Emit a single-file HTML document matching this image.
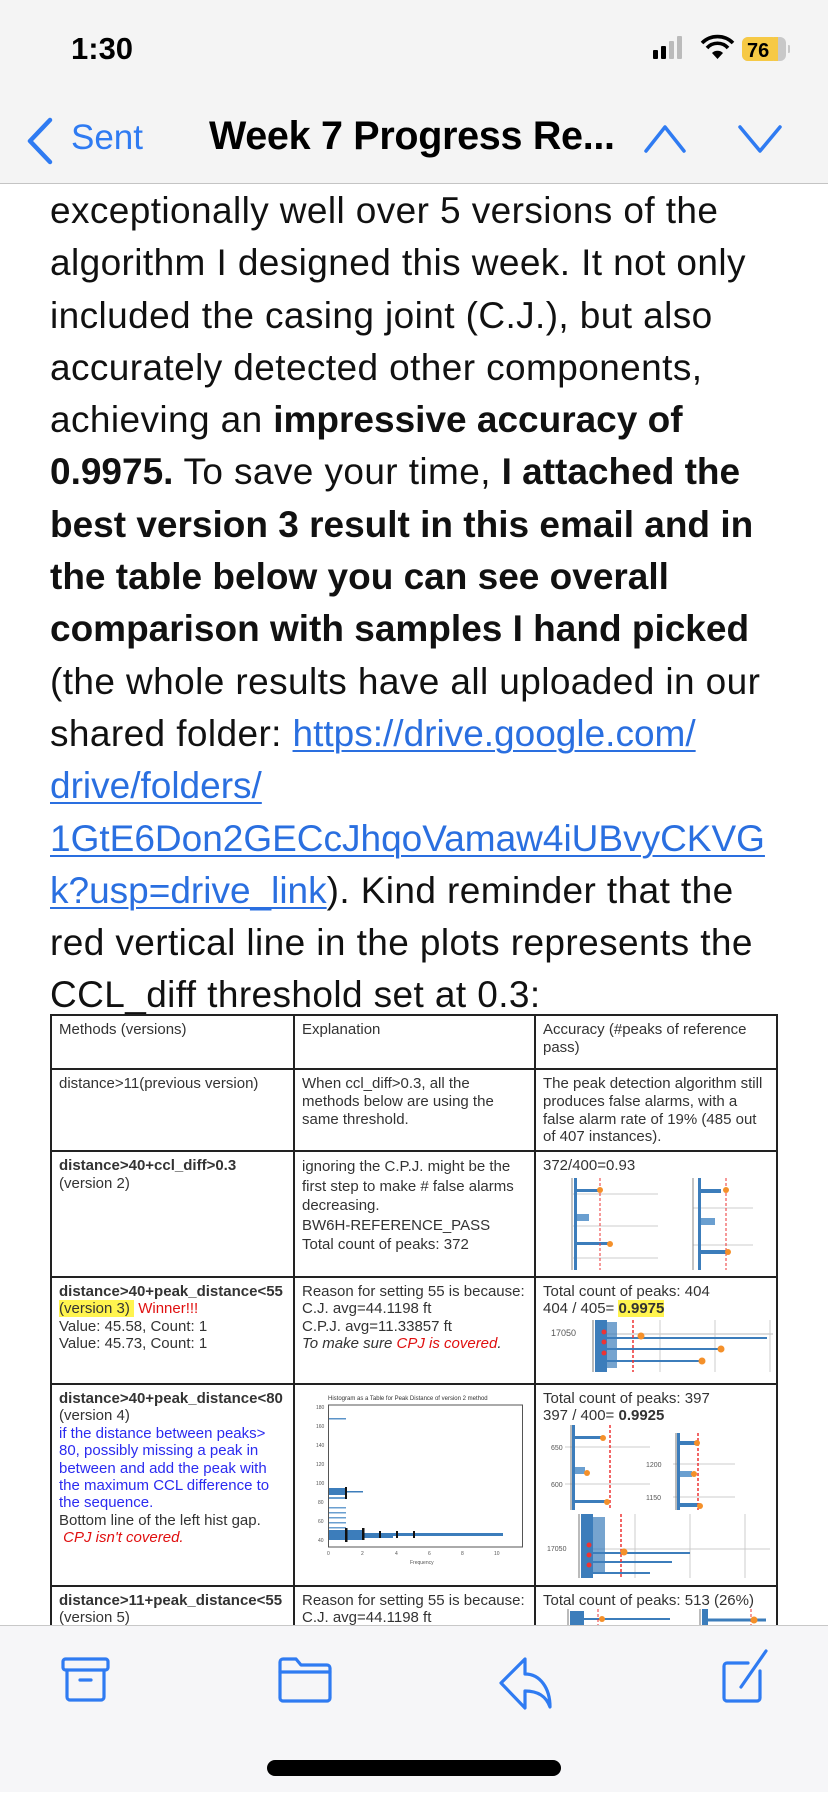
<!DOCTYPE html>
<html><head><meta charset="utf-8">
<style>
*{margin:0;padding:0;box-sizing:border-box}
body{width:828px;height:1792px;overflow:hidden;background:#fff;position:relative;font-family:"Liberation Sans",Arial,sans-serif;color:#000}
.hdr{position:absolute;left:0;top:0;width:828px;height:184px;background:#f4f4f4;border-bottom:1.5px solid #c4c4c4;z-index:5}
.body{position:absolute;left:50px;top:185px;font-size:37px;line-height:52.3px;white-space:nowrap;color:#111;letter-spacing:0.4px}
.body b{letter-spacing:0}
.body a{color:#2a6fe0;text-decoration:underline;text-decoration-thickness:1.5px;text-underline-offset:4px;letter-spacing:0}
.tb{position:absolute;font-size:15px;line-height:17.8px;color:#333;white-space:nowrap}
.hl{position:absolute;background:#222;}
.c{position:absolute;padding:7px 0 0 8px}
.blu{color:#2b2bf0}
.red{color:#e01010}
.toolbar{position:absolute;left:0;top:1625px;width:828px;height:167px;background:#f6f6f8;border-top:1.5px solid #c8c8c8;z-index:5}
</style></head><body>
<div class="hdr">
 <div style="position:absolute;left:71px;top:31px;font-size:31px;font-weight:bold;color:#000">1:30</div>
 <svg style="position:absolute;left:650px;top:34px" width="140" height="32">
  <rect x="3" y="16" width="5" height="9" rx="1" fill="#000"/>
  <rect x="11" y="12" width="5" height="13" rx="1" fill="#000"/>
  <rect x="19" y="7" width="5" height="18" rx="1" fill="#bbb"/>
  <rect x="27" y="2" width="5" height="23" rx="1" fill="#bbb"/>
  <path d="M52 9 a22 22 0 0 1 31 0" stroke="#000" stroke-width="3.6" fill="none"/>
  <path d="M57 14 a14 14 0 0 1 21 0" stroke="#000" stroke-width="3.6" fill="none"/>
  <path d="M62 19 L67.5 25 L73 19 a8 8 0 0 0 -11 0z" fill="#000"/>
  <rect x="92" y="3" width="44" height="24" rx="6" fill="#c8c8c8"/>
  <rect x="92" y="3" width="36" height="24" rx="6" fill="#f6c945"/>
  <rect x="124" y="3" width="4" height="24" fill="#f6c945"/>
  <path d="M138 11 a4 4 0 0 1 0 8z" fill="#c8c8c8"/>
  <text x="97" y="23" font-family="Liberation Sans" font-weight="bold" font-size="20" fill="#000">76</text>
 </svg>
 <svg style="position:absolute;left:22px;top:116px" width="36" height="50"><path d="M28 4 L8 25 L28 46" stroke="#2f7bf2" stroke-width="4.5" fill="none" stroke-linecap="round" stroke-linejoin="round"/></svg>
 <div style="position:absolute;left:71px;top:118px;font-size:35px;color:#2f7bf2">Sent</div>
 <div style="position:absolute;left:209px;top:114px;font-size:39.5px;font-weight:bold;color:#000;letter-spacing:-0.3px">Week 7 Progress Re...</div>
 <svg style="position:absolute;left:640px;top:117px" width="150" height="40"><path d="M6 34 L25 10 L44 34" stroke="#2f7bf2" stroke-width="3.5" fill="none" stroke-linecap="round" stroke-linejoin="round"/><path d="M100 10 L120 34 L140 10" stroke="#2f7bf2" stroke-width="3.5" fill="none" stroke-linecap="round" stroke-linejoin="round"/></svg>
</div>

<div class="body">exceptionally well over 5 versions of the<br>algorithm I designed this week. It not only<br>included the casing joint (C.J.), but also<br>accurately detected other components,<br>achieving an <b>impressive accuracy of</b><br><b>0.9975.</b> To save your time, <b>I attached the</b><br><b>best version 3 result in this email and in</b><br><b>the table below you can see overall</b><br><b>comparison with samples I hand picked</b><br>(the whole results have all uploaded in our<br>shared folder: <a>https://drive.google.com/</a><br><a>drive/folders/</a><br><a>1GtE6Don2GECcJhqoVamaw4iUBvyCKVG</a><br><a>k?usp=drive_link</a>). Kind reminder that the<br>red vertical line in the plots represents the<br>CCL_diff threshold set at 0.3:</div>

<div class="tb" style="left:0;top:0;width:828px;height:1625px">
 <div class="hl" style="left:50px;top:1014px;width:727px;height:1.5px"></div>
 <div class="hl" style="left:50px;top:1068px;width:727px;height:1.5px"></div>
 <div class="hl" style="left:50px;top:1150px;width:727px;height:1.5px"></div>
 <div class="hl" style="left:50px;top:1276px;width:727px;height:1.5px"></div>
 <div class="hl" style="left:50px;top:1383px;width:727px;height:1.5px"></div>
 <div class="hl" style="left:50px;top:1585px;width:727px;height:1.5px"></div>
 <div class="hl" style="left:50px;top:1014px;width:1.5px;height:611px"></div>
 <div class="hl" style="left:293px;top:1014px;width:1.5px;height:611px"></div>
 <div class="hl" style="left:534px;top:1014px;width:1.5px;height:611px"></div>
 <div class="hl" style="left:776px;top:1014px;width:1.5px;height:611px"></div>

 <div class="c" style="left:51px;top:1014px">Methods (versions)</div>
 <div class="c" style="left:294px;top:1014px">Explanation</div>
 <div class="c" style="left:535px;top:1014px">Accuracy (#peaks of reference<br>pass)</div>

 <div class="c" style="left:51px;top:1068px">distance&gt;11(previous version)</div>
 <div class="c" style="left:294px;top:1068px">When ccl_diff&gt;0.3, all the<br>methods below are using the<br>same threshold.</div>
 <div class="c" style="left:535px;top:1068px">The peak detection algorithm still<br>produces false alarms, with a<br>false alarm rate of 19% (485 out<br>of 407 instances).</div>

 <div class="c" style="left:51px;top:1150px"><b>distance&gt;40+ccl_diff&gt;0.3</b><br>(version 2)</div>
 <div class="c" style="left:294px;top:1150px;line-height:19.6px">ignoring the C.P.J. might be the<br>first step to make # false alarms<br>decreasing.<br>BW6H-REFERENCE_PASS<br>Total count of peaks: 372</div>
 <div class="c" style="left:535px;top:1150px">372/400=0.93</div>
 <svg style="position:absolute;left:548px;top:1178px" width="220" height="92">
  <g stroke="#ddd" stroke-width="1.5"><line x1="25" y1="16" x2="110" y2="16"/><line x1="25" y1="48" x2="110" y2="48"/><line x1="25" y1="80" x2="110" y2="80"/><line x1="145" y1="30" x2="205" y2="30"/><line x1="145" y1="67" x2="205" y2="67"/></g>
  <line x1="24" y1="0" x2="24" y2="92" stroke="#888"/><line x1="145" y1="0" x2="145" y2="92" stroke="#888"/>
  <rect x="26" y="0" width="3" height="92" fill="#3c7dbb"/><rect x="29" y="11" width="22" height="3" fill="#3c7dbb"/><rect x="29" y="36" width="12" height="7" fill="#6a9fd0"/><rect x="29" y="64" width="32" height="3" fill="#3c7dbb"/>
  <rect x="150" y="0" width="3" height="92" fill="#3c7dbb"/><rect x="153" y="11" width="20" height="4" fill="#3c7dbb"/><rect x="153" y="40" width="14" height="7" fill="#6a9fd0"/><rect x="153" y="72" width="26" height="4" fill="#3c7dbb"/>
  <line x1="52" y1="0" x2="52" y2="92" stroke="#e33" stroke-dasharray="3,2"/><line x1="178" y1="0" x2="178" y2="92" stroke="#e33" stroke-dasharray="3,2"/>
  <circle cx="52" cy="12" r="3" fill="#f4902a"/><circle cx="62" cy="66" r="3" fill="#f4902a"/><circle cx="178" cy="12" r="3" fill="#f4902a"/><circle cx="180" cy="74" r="3" fill="#f4902a"/>
 </svg>

 <div class="c" style="left:51px;top:1276px;line-height:17.4px"><b>distance&gt;40+peak_distance&lt;55</b><br><span style="background:#fff44f">(version 3)&nbsp;</span> <span class="red">Winner!!!</span><br>Value: 45.58, Count: 1<br>Value: 45.73, Count: 1</div>
 <div class="c" style="left:294px;top:1276px;line-height:17.4px">Reason for setting 55 is because:<br>C.J. avg=44.1198 ft<br>C.P.J. avg=11.33857 ft<br><i>To make sure <span class="red">CPJ is covered</span>.</i></div>
 <div class="c" style="left:535px;top:1276px;line-height:17.4px">Total count of peaks: 404<br>404 / 405= <b style="background:#fff44f">0.9975</b></div>
 <svg style="position:absolute;left:545px;top:1320px" width="230" height="55">
  <text x="6" y="16" font-size="9" fill="#555" font-family="Liberation Sans">17050</text>
  <line x1="50" y1="14" x2="228" y2="14" stroke="#ddd" stroke-width="2"/>
  <g stroke="#ccc"><line x1="115" y1="0" x2="115" y2="52"/><line x1="170" y1="0" x2="170" y2="52"/><line x1="225" y1="0" x2="225" y2="52"/></g>
  <line x1="48" y1="0" x2="48" y2="52" stroke="#777"/>
  <rect x="50" y="0" width="12" height="52" fill="#3c7dbb"/><rect x="62" y="2" width="10" height="46" fill="#3c7dbb" opacity=".7"/>
  <line x1="62" y1="18" x2="222" y2="18" stroke="#3c7dbb" stroke-width="2"/><line x1="62" y1="29" x2="176" y2="29" stroke="#3c7dbb" stroke-width="2"/><line x1="62" y1="41" x2="157" y2="41" stroke="#3c7dbb" stroke-width="2"/>
  <line x1="88" y1="0" x2="88" y2="52" stroke="#e33" stroke-dasharray="3,2" stroke-width="1.5"/>
  <circle cx="96" cy="16" r="3.5" fill="#f4902a"/><circle cx="176" cy="29" r="3.5" fill="#f4902a"/><circle cx="157" cy="41" r="3.5" fill="#f4902a"/>
  <circle cx="59" cy="12" r="2.5" fill="#e33"/><circle cx="59" cy="22" r="2.5" fill="#e33"/><circle cx="59" cy="33" r="2.5" fill="#e33"/>
 </svg>

 <div class="c" style="left:51px;top:1383px;line-height:17.4px"><b>distance&gt;40+peak_distance&lt;80</b><br>(version 4)<br><span class="blu">if the distance between peaks&gt;<br>80, possibly missing a peak in<br>between and add the peak with<br>the maximum CCL difference to<br>the sequence.</span><br>Bottom line of the left hist gap.<br>&nbsp;<i class="red">CPJ isn't covered.</i></div>
 <svg style="position:absolute;left:300px;top:1390px" width="230" height="185">
  <text x="28" y="10" font-size="6" fill="#333" font-family="Liberation Sans">Histogram as a Table for Peak Distance of version 2 method</text>
  <rect x="28.5" y="15" width="194" height="142" fill="none" stroke="#555"/>
  <g font-size="5" fill="#555" font-family="Liberation Sans"><text x="16" y="19">180</text><text x="16" y="38">160</text><text x="16" y="57">140</text><text x="16" y="76">120</text><text x="16" y="95">100</text><text x="18" y="114">80</text><text x="18" y="133">60</text><text x="18" y="152">40</text>
  <text x="27" y="165">0</text><text x="61" y="165">2</text><text x="95" y="165">4</text><text x="128" y="165">6</text><text x="161" y="165">8</text><text x="194" y="165">10</text><text x="110" y="174">Frequency</text></g>
  <rect x="29" y="28" width="17" height="1.5" fill="#5b93c8"/>
  <rect x="29" y="98" width="17" height="7" fill="#3c7dbb"/><rect x="46" y="101" width="17" height="1.5" fill="#3c7dbb"/><rect x="29" y="107" width="17" height="2" fill="#6a9fd0"/>
  <g fill="#6a9fd0"><rect x="29" y="117" width="17" height="1.5"/><rect x="29" y="122" width="17" height="1.5"/><rect x="29" y="127" width="17" height="1.5"/><rect x="29" y="132" width="17" height="1.5"/><rect x="29" y="137" width="17" height="1.5"/></g>
  <rect x="29" y="140" width="34" height="10" fill="#3c7dbb"/><rect x="63" y="143" width="140" height="3" fill="#3c7dbb"/><rect x="63" y="146" width="30" height="2" fill="#3c7dbb"/>
  <g fill="#111"><rect x="45" y="97" width="2" height="12"/><rect x="45" y="138" width="2.5" height="14"/><rect x="62" y="138" width="2.5" height="12"/><rect x="79" y="141" width="2" height="7"/><rect x="96" y="141" width="2" height="7"/><rect x="113" y="141" width="2" height="7"/></g>
 </svg>
 <div class="c" style="left:535px;top:1383px;line-height:17.4px">Total count of peaks: 397<br>397 / 400= <b>0.9925</b></div>
 <svg style="position:absolute;left:545px;top:1425px" width="230" height="160">
  <g font-size="7" fill="#555" font-family="Liberation Sans"><text x="6" y="25">650</text><text x="6" y="62">600</text><text x="101" y="42">1200</text><text x="101" y="75">1150</text><text x="2" y="126">17050</text></g>
  <g stroke="#ddd" stroke-width="1.5"><line x1="20" y1="22" x2="105" y2="22"/><line x1="20" y1="59" x2="105" y2="59"/><line x1="128" y1="39" x2="190" y2="39"/><line x1="128" y1="72" x2="190" y2="72"/><line x1="40" y1="124" x2="225" y2="124"/></g>
  <line x1="26" y1="0" x2="26" y2="85" stroke="#777"/><line x1="131" y1="8" x2="131" y2="85" stroke="#777"/><line x1="34" y1="89" x2="34" y2="153" stroke="#777"/>
  <rect x="27" y="0" width="3" height="85" fill="#3c7dbb"/><rect x="30" y="11" width="26" height="3" fill="#3c7dbb"/><rect x="30" y="42" width="10" height="7" fill="#6a9fd0"/><rect x="30" y="75" width="30" height="3" fill="#3c7dbb"/>
  <rect x="132" y="8" width="3" height="77" fill="#3c7dbb"/><rect x="135" y="16" width="15" height="4" fill="#3c7dbb"/><rect x="135" y="46" width="12" height="6" fill="#6a9fd0"/><rect x="135" y="78" width="20" height="4" fill="#3c7dbb"/>
  <line x1="65" y1="0" x2="65" y2="85" stroke="#e33" stroke-dasharray="3,2" stroke-width="1.5"/><line x1="153" y1="8" x2="153" y2="85" stroke="#e33" stroke-dasharray="3,2" stroke-width="1.5"/>
  <circle cx="58" cy="13" r="3" fill="#f4902a"/><circle cx="42" cy="48" r="3" fill="#f4902a"/><circle cx="62" cy="77" r="3" fill="#f4902a"/><circle cx="152" cy="18" r="3" fill="#f4902a"/><circle cx="149" cy="49" r="3" fill="#f4902a"/><circle cx="155" cy="81" r="3" fill="#f4902a"/>
  <g stroke="#ccc"><line x1="90" y1="89" x2="90" y2="153"/><line x1="145" y1="89" x2="145" y2="153"/><line x1="200" y1="89" x2="200" y2="153"/></g>
  <rect x="36" y="89" width="12" height="64" fill="#3c7dbb"/><rect x="48" y="92" width="12" height="56" fill="#3c7dbb" opacity=".7"/>
  <line x1="48" y1="128" x2="145" y2="128" stroke="#3c7dbb" stroke-width="2"/><line x1="48" y1="137" x2="127" y2="137" stroke="#3c7dbb" stroke-width="2"/><line x1="48" y1="148" x2="105" y2="148" stroke="#3c7dbb" stroke-width="2"/>
  <line x1="76" y1="89" x2="76" y2="153" stroke="#e33" stroke-dasharray="3,2" stroke-width="1.5"/>
  <circle cx="79" cy="127" r="3.5" fill="#f4902a"/><circle cx="44" cy="120" r="2.5" fill="#e33"/><circle cx="44" cy="130" r="2.5" fill="#e33"/><circle cx="44" cy="140" r="2.5" fill="#e33"/>
 </svg>

 <div class="c" style="left:51px;top:1585px;line-height:17.4px"><b>distance&gt;11+peak_distance&lt;55</b><br>(version 5)</div>
 <div class="c" style="left:294px;top:1585px;line-height:17.4px">Reason for setting 55 is because:<br>C.J. avg=44.1198 ft</div>
 <div class="c" style="left:535px;top:1585px;line-height:17.4px">Total count of peaks: 513 (26%)</div>
 <svg style="position:absolute;left:540px;top:1609px" width="236" height="20">
  <line x1="28" y1="0" x2="28" y2="20" stroke="#777"/><rect x="30" y="2" width="14" height="18" fill="#3c7dbb"/><line x1="44" y1="10" x2="130" y2="10" stroke="#3c7dbb" stroke-width="2"/><line x1="58" y1="0" x2="58" y2="20" stroke="#e33" stroke-dasharray="3,2"/><circle cx="62" cy="10" r="3" fill="#f4902a"/>
  <line x1="160" y1="0" x2="160" y2="20" stroke="#777"/><rect x="162" y="0" width="6" height="20" fill="#3c7dbb"/><line x1="168" y1="11" x2="226" y2="11" stroke="#3c7dbb" stroke-width="3"/><line x1="211" y1="0" x2="211" y2="20" stroke="#e33" stroke-dasharray="3,2"/><circle cx="214" cy="11" r="3.5" fill="#f4902a"/>
 </svg>
</div>

<div class="toolbar">
 <svg style="position:absolute;left:0;top:0" width="828" height="167">
  <g stroke="#2f7bf2" stroke-width="3.2" fill="none" stroke-linejoin="round" stroke-linecap="round">
   <rect x="63" y="33" width="45" height="11" rx="2.5"/>
   <path d="M67 44 V71 a3 3 0 0 0 3 3 H101 a3 3 0 0 0 3 -3 V44"/>
   <line x1="80" y1="54" x2="91" y2="54"/>
   <path d="M280 72 V36 a3 3 0 0 1 3 -3 H296 l5 6 H327 a3 3 0 0 1 3 3 V72 a3 3 0 0 1 -3 3 H283 a3 3 0 0 1 -3 -3z"/>
   <line x1="280" y1="46" x2="330" y2="46"/>
   <path d="M525 33 L501 57 L525 82 V65 C538 65 546 70 550 81 C550 62 540 48 525 48 Z"/>
   <path d="M760 45 V72 a3 3 0 0 1 -3 3 H727 a3 3 0 0 1 -3 -3 V40 a3 3 0 0 1 3 -3 H748"/>
   <path d="M766 25 L741 61"/>
  </g>
  <rect x="267" y="134" width="294" height="16" rx="8" fill="#000"/>
 </svg>
</div>
</body></html>
